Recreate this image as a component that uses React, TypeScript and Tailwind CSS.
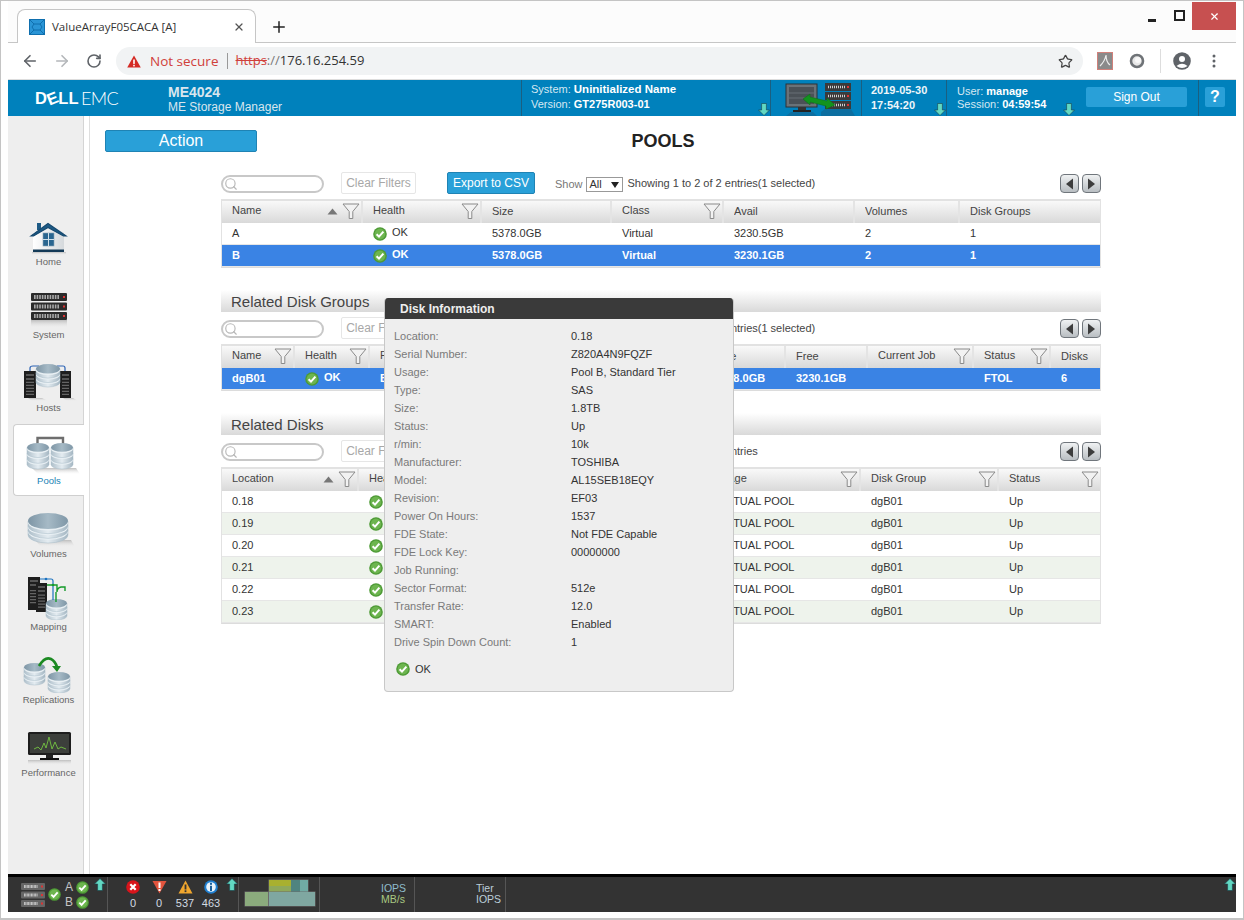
import React from "react";
import { ArrowLeft, ArrowRight, RotateCw, Star, X, Plus, Search } from "lucide-react";

function Check({ size = 14 }: { size?: number }) {
  return (
    <svg width={size} height={size} viewBox="0 0 14 14" className="shrink-0">
      <circle cx="7" cy="7" r="6.8" fill="#4d9a35" />
      <circle cx="7" cy="7" r="5.4" fill="#6db54f" />
      <path d="M3.6 7.2 L6 9.6 L10.4 4.6" fill="none" stroke="#fff" strokeWidth="2" />
    </svg>
  );
}

function Funnel() {
  return (
    <svg width="18" height="18" viewBox="0 0 18 18" className="shrink-0">
      <path d="M1 2 H17 L10.8 9.5 V16.5 H7.2 V9.5 Z" fill="#f2f2f2" stroke="#8a8a8a" strokeWidth="1" />
    </svg>
  );
}

function SortUp() {
  return (
    <svg width="11" height="7" viewBox="0 0 11 7" className="shrink-0">
      <path d="M5.5 0.5 L10.5 6.5 H0.5 Z" fill="#777" />
    </svg>
  );
}

function TealArrow({ down = false }: { down?: boolean }) {
  return (
    <svg width="12" height="13" viewBox="0 0 12 13" className={down ? "rotate-180" : ""}>
      <path d="M6 0.5 L11.5 6 H8.4 V12.5 H3.6 V6 H0.5 Z" fill="#62d8c2" stroke="#17414c" strokeWidth="0.6" />
    </svg>
  );
}

function Db({ x, y, w, h, layers = 3 }: { x: number; y: number; w: number; h: number; layers?: number }) {
  const ry = w * 0.2;
  const step = (h - ry * 2) / layers;
  const items = [];
  for (let i = layers; i >= 1; i--) {
    const top = y + ry + step * (i - 1);
    items.push(
      <g key={i}>
        <path
          d={`M${x} ${top} V${top + step} A${w / 2} ${ry} 0 0 0 ${x + w} ${top + step} V${top} Z`}
          fill="url(#dbBody)"
          stroke="#a9bcc8"
          strokeWidth="0.5"
        />
        <ellipse cx={x + w / 2} cy={top + 1.5} rx={w / 2} ry={ry} fill="#e9f0f4" />
      </g>
    );
  }
  return (
    <g>
      {items}
      <ellipse cx={x + w / 2} cy={y + ry} rx={w / 2} ry={ry} fill="url(#dbTop)" />
    </g>
  );
}

function Defs() {
  return (
    <defs>
      <linearGradient id="dbBody" x1="0" x2="1" y1="0" y2="0">
        <stop offset="0" stopColor="#aebfca" />
        <stop offset="0.5" stopColor="#e4ecf1" />
        <stop offset="1" stopColor="#a4b6c2" />
      </linearGradient>
      <linearGradient id="dbTop" x1="0" x2="1" y1="0" y2="0">
        <stop offset="0" stopColor="#7d95a5" />
        <stop offset="0.5" stopColor="#a6bac6" />
        <stop offset="1" stopColor="#7f97a7" />
      </linearGradient>
      <linearGradient id="shadowFade" x1="0" x2="0" y1="0" y2="1">
        <stop offset="0" stopColor="#bdbdbd" />
        <stop offset="1" stopColor="#eeeeee" stopOpacity="0" />
      </linearGradient>
      <linearGradient id="houseBody" x1="0" x2="1" y1="0" y2="0">
        <stop offset="0" stopColor="#ffffff" />
        <stop offset="1" stopColor="#d5d9dc" />
      </linearGradient>
    </defs>
  );
}

function ServerUnit({ x, y, w, h, fill = "#2b2b2b", vent = "#a8a8a8" }: { x: number; y: number; w: number; h: number; fill?: string; vent?: string }) {
  const vents = [];
  for (let i = 0; i < 10; i++) {
    vents.push(<rect key={i} x={x + 3 + (i * (w - 10)) / 10} y={y + 2} width={(w - 10) / 16} height={h - 4} fill={vent} />);
  }
  return (
    <g>
      <rect x={x} y={y} width={w} height={h} rx="1" fill={fill} />
      {vents}
      <rect x={x + w - 4} y={y + h / 2 - 1} width="2" height="2" fill="#d33" />
    </g>
  );
}

function Tower({ x, y, w, h }: { x: number; y: number; w: number; h: number }) {
  const lines = [];
  for (let i = 0; i < 5; i++) {
    lines.push(<rect key={i} x={x + 2} y={y + h * 0.4 + i * 3} width={w - 4} height="1" fill="#777" />);
  }
  return (
    <g>
      <rect x={x} y={y} width={w} height={h} fill="#1e1e1e" />
      <rect x={x + 2} y={y + 3} width={w - 4} height="2" fill="#555" />
      <rect x={x + 2} y={y + 7} width={w - 4} height="2" fill="#555" />
      {lines}
    </g>
  );
}

function RailIcon({ name }: { name: string }) {
  let body: React.ReactNode = null;
  if (name === "Home") {
    body = (
      <g>
        <rect x="19" y="47" width="34" height="3" fill="url(#shadowFade)" />
        <path d="M20 28 L35 19 L51 28 V45 H20 Z" fill="url(#houseBody)" />
        <rect x="24" y="18" width="4" height="7" fill="#1d5a85" />
        <path d="M18 31 L35 18.5 L53 31 L50.5 31 L35 22.5 L20.5 31 Z" fill="#1d5a85" stroke="#174a70" strokeWidth="1.2" />
        <rect x="30" y="28" width="11" height="13" fill="#2a6690" stroke="#8aa5b6" strokeWidth="0.6" />
        <path d="M35.5 28 V41 M30 34.5 H41" stroke="#cfe0ea" strokeWidth="1" />
        <rect x="20" y="44.5" width="31" height="2.5" fill="#143a57" />
      </g>
    );
  } else if (name === "System") {
    body = (
      <g>
        <rect x="18" y="42" width="36" height="8" fill="url(#shadowFade)" />
        <ServerUnit x={18} y={15} w={36} h={8} />
        <ServerUnit x={18} y={24.5} w={36} h={8} />
        <ServerUnit x={18} y={34} w={36} h={8} />
      </g>
    );
  } else if (name === "Hosts") {
    body = (
      <g>
        <path d="M15 47 H29 L35 50 H19 Z M50 47 H60 L65 50 H54 Z" fill="url(#shadowFade)" />
        <path d="M17 21 V17 Q17 15 20 15 H26 M52 21 V17 Q52 15 50 15 H44" fill="none" stroke="#2b62b4" strokeWidth="1.2" />
        <Tower x={11} y={20} w={12} h={27} />
        <Tower x={47} y={20} w={11} h={27} />
        <Db x={23} y={13} w={24} h={23} />
      </g>
    );
  } else if (name === "Pools") {
    body = (
      <g>
        <path d="M23.5 20 V13 H49 V20" fill="none" stroke="#6e6e6e" strokeWidth="2.4" />
        <path d="M18 43 H62 L66 49 H24 Z" fill="url(#shadowFade)" />
        <Db x={13} y={18} w={22} h={26} />
        <Db x={37} y={18} w={22} h={26} />
      </g>
    );
  } else if (name === "Volumes") {
    body = (
      <g>
        <path d="M22 43 H58 L62 50 H28 Z" fill="url(#shadowFade)" />
        <Db x={15} y={16} w={40} h={30} />
      </g>
    );
  } else if (name === "Mapping") {
    body = (
      <g>
        <Tower x={15} y={7} w={12} h={33} />
        <Tower x={23} y={13} w={11} h={29} />
        <Db x={33} y={29} w={21} h={21} />
        <path d="M27 9 H38 Q40 9 40 11 V30" fill="none" stroke="#1b72c0" strokeWidth="1.2" />
        <path d="M34 15 H44 V22 Q44 18 48 17 H52 V21 M43 32 V22" fill="none" stroke="#159a2a" strokeWidth="1.4" />
        <circle cx="33" cy="9" r="1.3" fill="#1b72c0" />
        <circle cx="40" cy="15" r="1.3" fill="#159a2a" />
      </g>
    );
  } else if (name === "Replications") {
    body = (
      <g>
        <Db x={11} y={20} w={21} h={22} />
        <Db x={35} y={29} w={22} h={21} />
        <path d="M26 23 Q32 13 38 16 Q42 18 44 24" fill="none" stroke="#1c8a22" strokeWidth="2.6" />
        <path d="M39 23 L48 23 L44 29 Z" fill="#1c8a22" />
      </g>
    );
  } else if (name === "Performance") {
    body = (
      <g>
        <rect x="15" y="16" width="43" height="23" rx="1.5" fill="#1d1d1d" />
        <rect x="17" y="18" width="39" height="19" fill="#3c3f3b" />
        <path d="M21 33 L25 31 L28 34 L31 27 L33 32 L36 21 L39 33 L42 26 L45 33 L48 31 L53 33" fill="none" stroke="#74c442" strokeWidth="0.9" />
        <rect x="33" y="39" width="7" height="3" fill="#222" />
        <rect x="27" y="42" width="19" height="2" fill="#111" />
        <rect x="15" y="44" width="43" height="5" fill="url(#shadowFade)" />
      </g>
    );
  }
  return (
    <svg width="71" height="50" viewBox="0 0 71 50" className="block shrink-0">
      <Defs />
      {body}
    </svg>
  );
}

function Rail() {
  const items = ["Home", "System", "Hosts", "Pools", "Volumes", "Mapping", "Replications", "Performance"];
  return (
    <div className="w-[76px] shrink-0 bg-[#eeeeee] border-r border-[#d4d4d4] pt-[89px] pl-[5px]">
      {items.map((n) => (
        <div
          key={n}
          className={
            n === "Pools"
              ? "w-[71px] h-[72px] mb-px bg-white border border-r-0 border-[#cfcfcf] rounded-l-[4px] flex flex-col items-center"
              : "w-[71px] h-[73px] flex flex-col items-center"
          }
        >
          <RailIcon name={n} />
          <div className={n === "Pools" ? "text-[9.5px] leading-[12px] text-[#1b83b5]" : "mt-px text-[9.5px] leading-[12px] text-[#666]"}>{n}</div>
        </div>
      ))}
    </div>
  );
}

function NavButtons() {
  const cls =
    "w-[19px] h-[19px] rounded-[4px] border border-[#70767c] bg-linear-to-b from-[#f0f2f3] to-[#b9bec2] flex items-center justify-center";
  return (
    <div className="flex gap-[3px] mt-[2px]">
      <div className={cls}>
        <svg width="9" height="12" viewBox="0 0 9 12"><path d="M8 0.5 V11.5 L1 6 Z" fill="#3d3d3d" /></svg>
      </div>
      <div className={cls}>
        <svg width="9" height="12" viewBox="0 0 9 12"><path d="M1 0.5 V11.5 L8 6 Z" fill="#3d3d3d" /></svg>
      </div>
    </div>
  );
}

function Toolbar({ text }: { text: string }) {
  return (
    <div className="h-[22px] flex items-start mb-[5px]">
      <div className="w-[103px] h-[18px] mt-[3px] rounded-full border-2 border-[#c8c8c8] flex items-center pl-[1px] text-[#b8b8b8]">
        <Search size={14} strokeWidth={2} />
      </div>
      <div className="ml-[17px] w-[75px] h-[22px] border border-[#e6e6e6] rounded-[2px] flex items-center justify-center text-[12px] text-[#a8a8a8]">
        Clear Filters
      </div>
      <div className="ml-[31px] w-[88px] h-[22px] bg-[#29a0d8] border border-[#1f83b4] rounded-[2px] flex items-center justify-center text-[12px] text-white">
        Export to CSV
      </div>
      <div className="ml-[20px] mt-[5px] text-[11px] leading-[14px] text-[#777]">Show</div>
      <div className="ml-[3px] mt-[5px] w-[37px] h-[15px] border border-[#999] bg-white flex items-center justify-between px-[3px] text-[11px] text-[#333]">
        <span>All</span>
        <svg width="8" height="6" viewBox="0 0 8 6"><path d="M0 0 H8 L4 6 Z" fill="#222" /></svg>
      </div>
      <div className="ml-[5px] mt-[4px] text-[11px] leading-[14px] text-[#444]">{text}</div>
      <div className="flex-1" />
      <NavButtons />
    </div>
  );
}

type Head = { t: string; f?: boolean; s?: boolean };
type Cell = string | { ok: true } | { icon: true };

function OkCell({ bold }: { bold: boolean }) {
  return (
    <div className="flex items-center gap-[5px]">
      <Check />
      <span className={bold ? "font-bold text-white -mt-[3px]" : "-mt-[3px]"}>OK</span>
    </div>
  );
}

function DataTable({
  cols,
  heads,
  rows,
  selected,
}: {
  cols: string;
  heads: Head[];
  rows: Cell[][];
  selected?: number;
}) {
  return (
    <div className="border border-t-2 border-[#e2e2e2] border-b-[#dcdcdc]">
      <div className={`grid ${cols} h-[22px]`}>
        {heads.map((h, i) => (
          <div
            key={i}
            className="bg-linear-to-b from-[#f9f9f9] to-[#d9d9d9] border-r-2 border-[#e4e4e4] last:border-r-0 flex items-center pl-[10px] pr-[1px] text-[11px] text-[#444]"
          >
            <span className={h.f ? "flex-1 truncate -mt-[4px]" : "flex-1 truncate -mt-[2px]"}>{h.t}</span>
            {h.s && <span className="mr-[4px] -mt-[2px] flex"><SortUp /></span>}
            {h.f && <span className="-mt-[2px] flex"><Funnel /></span>}
          </div>
        ))}
      </div>
      {rows.map((r, ri) => {
        const sel = selected === ri;
        const bg = sel ? "bg-[#3a83e4] text-white font-bold" : ri % 2 === 1 ? "bg-[#eef3ec] text-[#333]" : "bg-white text-[#333]";
        return (
          <div key={ri} className={`grid ${cols} h-[22px] ${bg} border-b border-[#e6e6e6] text-[11px]`}>
            {r.map((c, ci) => (
              <div key={ci} className="pl-[10px] flex items-center whitespace-nowrap overflow-hidden">
                {typeof c === "string" ? c : "icon" in c ? <Check /> : <OkCell bold={sel} />}
              </div>
            ))}
          </div>
        );
      })}
    </div>
  );
}

function Section({ title }: { title: string }) {
  return (
    <div className="mt-[22px] mb-[5px] h-[22px] bg-linear-to-b from-white to-[#d9d9d9] pl-[10px] pt-[3px] flex items-center text-[15px] text-[#444]">
      {title}
    </div>
  );
}

function Main() {
  const disks = ["0.18", "0.19", "0.20", "0.21", "0.22", "0.23"];
  return (
    <div className="flex-1 ml-[5px] border-l border-[#dedede] bg-white min-w-0">
      <div className="grid grid-cols-[1fr_auto_1fr] items-center pt-[14px]">
        <div className="pl-[15px]">
          <div className="w-[152px] h-[22px] bg-[#29a0d8] border border-[#1f83b4] rounded-[2px] flex items-center justify-center text-[16px] text-white">
            Action
          </div>
        </div>
        <div className="text-[18px] font-bold text-[#222] leading-[22px]">POOLS</div>
        <div />
      </div>
      <div className="ml-[131px] w-[880px] mt-[20px]">
        <Toolbar text="Showing 1 to 2 of 2 entries(1 selected)" />
        <DataTable
          cols="grid-cols-[141px_119px_130px_112px_131px_105px_140px]"
          heads={[
            { t: "Name", s: true, f: true },
            { t: "Health", f: true },
            { t: "Size" },
            { t: "Class", f: true },
            { t: "Avail" },
            { t: "Volumes" },
            { t: "Disk Groups" },
          ]}
          rows={[
            ["A", { ok: true }, "5378.0GB", "Virtual", "3230.5GB", "2", "1"],
            ["B", { ok: true }, "5378.0GB", "Virtual", "3230.1GB", "2", "1"],
          ]}
          selected={1}
        />
        <Section title="Related Disk Groups" />
        <Toolbar text="Showing 1 to 1 of 1 entries(1 selected)" />
        <DataTable
          cols="grid-cols-[73px_75px_335px_81px_82px_106px_77px_49px]"
          heads={[
            { t: "Name", f: true },
            { t: "Health", f: true },
            { t: "Pool", f: true },
            { t: "Size" },
            { t: "Free" },
            { t: "Current Job", f: true },
            { t: "Status", f: true },
            { t: "Disks" },
          ]}
          rows={[["dgB01", { ok: true }, "B", "5378.0GB", "3230.1GB", "", "FTOL", "6"]]}
          selected={0}
        />
        <Section title="Related Disks" />
        <Toolbar text="Showing 1 to 6 of 6 entries" />
        <DataTable
          cols="grid-cols-[137px_346px_156px_138px_101px]"
          heads={[
            { t: "Location", s: true, f: true },
            { t: "Health", f: true },
            { t: "Usage", f: true },
            { t: "Disk Group", f: true },
            { t: "Status", f: true },
          ]}
          rows={disks.map((d) => [d, { icon: true }, "VIRTUAL POOL", "dgB01", "Up"])}
        />
      </div>
    </div>
  );
}

function DiskPopup() {
  const rows: [string, string][] = [
    ["Location:", "0.18"],
    ["Serial Number:", "Z820A4N9FQZF"],
    ["Usage:", "Pool B, Standard Tier"],
    ["Type:", "SAS"],
    ["Size:", "1.8TB"],
    ["Status:", "Up"],
    ["r/min:", "10k"],
    ["Manufacturer:", "TOSHIBA"],
    ["Model:", "AL15SEB18EQY"],
    ["Revision:", "EF03"],
    ["Power On Hours:", "1537"],
    ["FDE State:", "Not FDE Capable"],
    ["FDE Lock Key:", "00000000"],
    ["Job Running:", ""],
    ["Sector Format:", "512e"],
    ["Transfer Rate:", "12.0"],
    ["SMART:", "Enabled"],
    ["Drive Spin Down Count:", "1"],
  ];
  return (
    <div className="absolute left-[383px] top-[297px] w-[350px] h-[394px] bg-[#eeeeee] border border-t-0 border-[#c8c8c8] rounded-[4px] overflow-hidden">
      <div className="h-[21px] bg-[#3a3a3a] pl-[15px] flex items-center text-[12px] font-bold text-[#eeeeee]">Disk Information</div>
      <div className="pt-[8px] pl-[9px]">
        {rows.map(([a, b]) => (
          <div key={a} className="grid grid-cols-[177px_1fr] h-[18px] items-center text-[11px]">
            <span className="text-[#7a7a7a]">{a}</span>
            <span className="text-[#333]">{b}</span>
          </div>
        ))}
      </div>
      <div className="mt-[10px] pl-[11px] flex items-center gap-[5px] text-[11px] text-[#333]">
        <Check />
        <span>OK</span>
      </div>
    </div>
  );
}

function Header() {
  return (
    <div className="h-[36px] bg-[#0081bc] flex text-white shrink-0">
      <div className="w-[513px] flex">
        <div className="w-[160px] pl-[27px] flex items-center leading-none">
          <span className="text-[16.5px] font-bold tracking-[0.2px] flex items-center">
            D<span className="inline-block -rotate-[22deg]">E</span>LL
          </span>
          <span className="ml-[2px] text-[18px] tracking-[-0.6px] font-['Lato',sans-serif] font-light">EMC</span>
        </div>
        <div className="pt-[4px] text-[#d9e6ee]">
          <div className="text-[14px] font-bold leading-[16px]">ME4024</div>
          <div className="text-[12px] leading-[14px]">ME Storage Manager</div>
        </div>
      </div>
      <div className="w-[249px] border-l border-[#1b5f80] pl-[9px] pt-[2px] relative">
        <div className="text-[11px] leading-[15px] text-[#d6e8f2]">
          System: <span className="text-[11.5px] font-bold text-white">Uninitialized Name</span>
        </div>
        <div className="text-[11px] leading-[15px] text-[#d6e8f2]">
          Version: <span className="font-bold text-white">GT275R003-01</span>
        </div>
        <span className="absolute right-0 bottom-0 flex"><TealArrow down /></span>
      </div>
      <div className="w-[91px] border-l border-[#1b5f80]">
        <svg width="91" height="36" viewBox="0 0 91 36">
          <rect x="15" y="4" width="31" height="23" fill="#6a7278" stroke="#2d3236" />
          <rect x="18" y="7" width="25" height="17" fill="#4b5157" />
          <path d="M18 13 H43 M18 18 H43" stroke="#70777d" strokeWidth="0.8" />
          <rect x="27" y="27" width="8" height="3" fill="#333" />
          <rect x="22" y="30" width="18" height="2" fill="#222" />
          <path d="M15 36 L20 32 H42 L46 36 Z" fill="#0c6ea0" />
          <rect x="54" y="3" width="26" height="8" fill="#3a3a3a" />
          <rect x="54" y="12" width="26" height="8" fill="#3a3a3a" />
          <rect x="54" y="21" width="26" height="8" fill="#3a3a3a" />
          <path d="M57 7 H74 M57 16 H74 M57 25 H74" stroke="#cfcfcf" strokeWidth="2.4" strokeDasharray="1 1" />
          <rect x="76" y="6" width="2" height="2" fill="#d33" />
          <rect x="76" y="15" width="2" height="2" fill="#d33" />
          <rect x="76" y="24" width="2" height="2" fill="#d33" />
          <path d="M50 32 L54 29 H80 L84 36 H50 Z" fill="#0c6ea0" />
          <path d="M32 19 L39 14 V17 L56 21 V18 L64 25 L55 29 V26 L39 22 V25 Z" fill="#12931f" stroke="#0c6c17" strokeWidth="0.5" />
        </svg>
      </div>
      <div className="w-[85px] border-l border-[#1b5f80] pl-[9px] pt-[3px] relative text-[11px] font-bold leading-[15px] text-[#eef6fa]">
        <div>2019-05-30</div>
        <div>17:54:20</div>
        <span className="absolute right-0 bottom-0 flex"><TealArrow down /></span>
      </div>
      <div className="w-[252px] border-l border-[#1b5f80] flex relative">
        <div className="pl-[10px] pt-[5px] w-[139px] text-[11px] leading-[13px] text-[#d6e8f2]">
          <div>
            User: <span className="font-bold text-white">manage</span>
          </div>
          <div>
            Session: <span className="font-bold text-white">04:59:54</span>
          </div>
        </div>
        <span className="absolute left-[116px] bottom-0 flex"><TealArrow down /></span>
        <div className="mt-[7px] w-[101px] h-[20px] bg-[#29a0d8] rounded-[2px] flex items-center justify-center text-[12px] text-white">
          Sign Out
        </div>
      </div>
      <div className="flex-1 border-l border-[#1b5f80] pl-[6px] pt-[7px]">
        <div className="w-[20px] h-[20px] bg-[#29a0d8] rounded-[2px] flex items-center justify-center text-[16px] font-bold text-white">?</div>
      </div>
    </div>
  );
}

function Alert({ kind }: { kind: string }) {
  if (kind === "x")
    return (
      <svg width="14" height="14" viewBox="0 0 14 14">
        <circle cx="7" cy="7" r="6.8" fill="#d8141b" />
        <path d="M4.3 4.3 L9.7 9.7 M9.7 4.3 L4.3 9.7" stroke="#fff" strokeWidth="2.2" />
      </svg>
    );
  if (kind === "d")
    return (
      <svg width="15" height="14" viewBox="0 0 15 14">
        <path d="M0.5 1 H14.5 L7.5 13.5 Z" fill="#e2543d" />
        <rect x="6.5" y="2.5" width="2" height="5.5" fill="#fff" />
        <rect x="6.5" y="9" width="2" height="2" fill="#fff" />
      </svg>
    );
  if (kind === "w")
    return (
      <svg width="15" height="14" viewBox="0 0 15 14">
        <path d="M7.5 0.5 L14.5 13.5 H0.5 Z" fill="#f0a62e" />
        <rect x="6.6" y="4.5" width="1.8" height="5" fill="#333" />
        <rect x="6.6" y="10.3" width="1.8" height="1.8" fill="#333" />
      </svg>
    );
  return (
    <svg width="14" height="14" viewBox="0 0 14 14">
      <circle cx="7" cy="7" r="6.8" fill="#1f7fd0" />
      <circle cx="7" cy="7" r="4.8" fill="#e8f3fb" />
      <rect x="6" y="2.8" width="2" height="2" fill="#1a5f9a" />
      <rect x="6" y="5.8" width="2" height="5.2" fill="#1a5f9a" />
    </svg>
  );
}

function Footer() {
  const alerts: [string, string][] = [["x", "0"], ["d", "0"], ["w", "537"], ["i", "463"]];
  return (
    <div className="h-[38px] shrink-0 bg-[#333333] border-t-[3px] border-black flex">
      <div className="w-[100px] border-r border-[#555] flex items-center pl-[13px] relative">
        <svg width="24" height="24" viewBox="0 0 24 24">
          <ServerUnit x={0} y={0} w={24} h={7} fill="#666" vent="#cfcfcf" />
          <ServerUnit x={0} y={8.5} w={24} h={7} fill="#666" vent="#cfcfcf" />
          <ServerUnit x={0} y={17} w={24} h={7} fill="#666" vent="#cfcfcf" />
        </svg>
        <span className="ml-[3px] flex"><Check size={13} /></span>
        <div className="ml-[4px] text-[12px] text-[#c4c4c4] leading-[15px]">
          <div className="flex items-center gap-[3px]">A <Check size={13} /></div>
          <div className="flex items-center gap-[3px]">B <Check size={13} /></div>
        </div>
        <span className="absolute right-[1px] top-[1px] flex"><TealArrow /></span>
      </div>
      <div className="w-[131px] border-r border-[#555] flex pl-[12px] relative">
        {alerts.map(([k, v], i) => (
          <div key={i} className="w-[26px] flex flex-col items-center pt-[3px]">
            <Alert kind={k} />
            <span className="text-[11px] leading-[14px] text-[#d3dbe2] mt-[2px]">{v}</span>
          </div>
        ))}
        <span className="absolute right-0 top-[1px] flex"><TealArrow /></span>
      </div>
      <div className="w-[81px] border-r border-[#555] pl-[5px] pt-[1px]">
        <svg width="72" height="30" viewBox="0 0 72 30">
          <rect x="24.5" y="1.5" width="40" height="15" fill="#6c6c6c" />
          <rect x="25" y="2" width="22" height="6" fill="#a8b02f" />
          <rect x="25" y="8" width="22" height="7" fill="#8fa95a" />
          <rect x="47" y="2" width="9" height="13" fill="#4f8480" />
          <rect x="56" y="2" width="8" height="13" fill="#70aba4" />
          <rect x="0.5" y="13.5" width="71" height="15" fill="#6c6c6c" />
          <rect x="1" y="14" width="23" height="14" fill="#8bab7d" />
          <rect x="25" y="14" width="46" height="14" fill="#7fa7a1" />
        </svg>
      </div>
      <div className="w-[95px] border-r border-[#555] pl-[61px] pt-[6px] text-[10.5px] leading-[11px]">
        <div className="text-[#8fbccc]">IOPS</div>
        <div className="text-[#a9c982]">MB/s</div>
      </div>
      <div className="w-[91px] border-r border-[#555] pl-[61px] pt-[6px] text-[10.5px] leading-[11px] text-[#bccfda]">
        <div>Tier</div>
        <div>IOPS</div>
      </div>
      <div className="flex-1 flex justify-end pr-[0px] pt-[1px]">
        <TealArrow />
      </div>
    </div>
  );
}

function BrowserChrome() {
  return (
    <div className="font-['Open_Sans',sans-serif] shrink-0">
      <div className="h-[42px] flex border-b border-[#c6c6c6] bg-[#fcfcfc] relative">
        <div className="ml-[9px] mt-[8px] w-[239px] h-[34px] -mb-px bg-white border border-b-0 border-[#c6c6c6] rounded-t-[8px] flex items-center pl-[11px] pr-[10px]">
          <svg width="16" height="16" viewBox="0 0 16 16" className="shrink-0">
            <rect width="16" height="16" fill="#0f6fae" />
            <rect x="1" y="1" width="14" height="14" fill="#2a95d6" />
            <path d="M1 1 L5 5 H11 L15 1 M1 15 L5 11 H11 L15 15 M5 5 L3 8 L5 11 M11 5 L13 8 L11 11" fill="none" stroke="#0f6fae" strokeWidth="1" />
          </svg>
          <span className="ml-[7px] flex-1 text-[11.5px] text-[#333] whitespace-nowrap">ValueArrayF05CACA [A]</span>
          <X size={12} strokeWidth={2.5} className="text-[#555]" />
        </div>
        <Plus size={18} strokeWidth={2} className="ml-[14px] mt-[17px] text-[#222]" />
        <div className="flex-1" />
        <div className="flex items-start">
          <div className="w-[8px] h-[3px] bg-[#222] mt-[18px] mr-[18px]" />
          <div className="w-[11px] h-[11px] border-2 border-[#222] mt-[9px] mr-[7px]" />
          <div className="w-[44px] h-[28px] bg-[#c75050] mt-[1px] flex items-center justify-center text-white">
            <X size={11} strokeWidth={2.5} />
          </div>
        </div>
      </div>
      <div className="h-[37px] bg-white flex items-center border-b border-[#dddddd]">
        <ArrowLeft size={18} strokeWidth={2.2} className="ml-[13px] text-[#5f6368]" />
        <ArrowRight size={18} strokeWidth={2.2} className="ml-[14px] text-[#b4b7ba]" />
        <RotateCw size={16} strokeWidth={2.4} className="ml-[15px] text-[#5f6368]" />
        <div className="ml-[14px] w-[967px] h-[28px] bg-[#f1f3f4] rounded-full flex items-center pl-[11px] pr-[10px]">
          <svg width="14" height="13" viewBox="0 0 14 13" className="shrink-0">
            <path d="M7 0.5 L13.8 12.5 H0.2 Z" fill="#d42b25" />
            <rect x="6.2" y="4.5" width="1.6" height="4.4" fill="#fff" />
            <rect x="6.2" y="9.8" width="1.6" height="1.6" fill="#fff" />
          </svg>
          <span className="ml-[9px] text-[13.5px] text-[#d0403a] whitespace-nowrap">Not secure</span>
          <span className="ml-[9px] w-px h-[16px] bg-[#999]" />
          <span className="ml-[7px] text-[13px] text-[#d0403a] line-through whitespace-nowrap">https</span>
          <span className="text-[13px] text-[#777]">://</span>
          <span className="text-[13px] text-[#333] whitespace-nowrap">176.16.254.59</span>
          <div className="flex-1" />
          <Star size={15} strokeWidth={2} className="text-[#444]" />
        </div>
        <svg width="16" height="18" viewBox="0 0 16 18" className="ml-[14px]">
          <rect x="0.5" y="0.5" width="15" height="17" fill="#8a8a8a" stroke="#d0807a" />
          <path d="M3 14 Q8 9 9 3 Q9 10 13 13" fill="none" stroke="#eee" strokeWidth="1.2" />
        </svg>
        <svg width="16" height="16" viewBox="0 0 16 16" className="ml-[16px]">
          <circle cx="8" cy="8" r="6" fill="#e8e8e8" stroke="#6f7377" strokeWidth="2.6" />
          <circle cx="9" cy="7" r="3" fill="#f8f8f8" />
        </svg>
        <span className="ml-[15px] w-px h-[24px] bg-[#dddddd]" />
        <svg width="18" height="18" viewBox="0 0 18 18" className="ml-[12px]">
          <circle cx="9" cy="9" r="8.8" fill="#5f6368" />
          <circle cx="9" cy="7" r="3" fill="#fff" />
          <path d="M3.5 14 Q9 9.5 14.5 14 Q9 18 3.5 14 Z" fill="#fff" />
        </svg>
        <svg width="4" height="14" viewBox="0 0 4 14" className="ml-[21px]">
          <circle cx="2" cy="2" r="1.5" fill="#5f6368" />
          <circle cx="2" cy="7" r="1.5" fill="#5f6368" />
          <circle cx="2" cy="12" r="1.5" fill="#5f6368" />
        </svg>
      </div>
    </div>
  );
}

export default function App() {
  return (
    <div className="relative w-[1244px] h-[920px] overflow-hidden bg-white font-['Liberation_Sans',Arial,sans-serif] border-t border-l border-r border-[#c4c4c4] px-[7px]">
      <div className="h-[918px] flex flex-col border-b-0">
        <BrowserChrome />
        <Header />
        <div className="flex flex-1 min-h-0">
          <Rail />
          <Main />
        </div>
        <Footer />
        <div className="h-[7px] shrink-0 bg-white" />
      </div>
      <div className="absolute left-0 right-0 bottom-0 h-[2px] bg-[#c4c4c4]" />
      <DiskPopup />
    </div>
  );
}
